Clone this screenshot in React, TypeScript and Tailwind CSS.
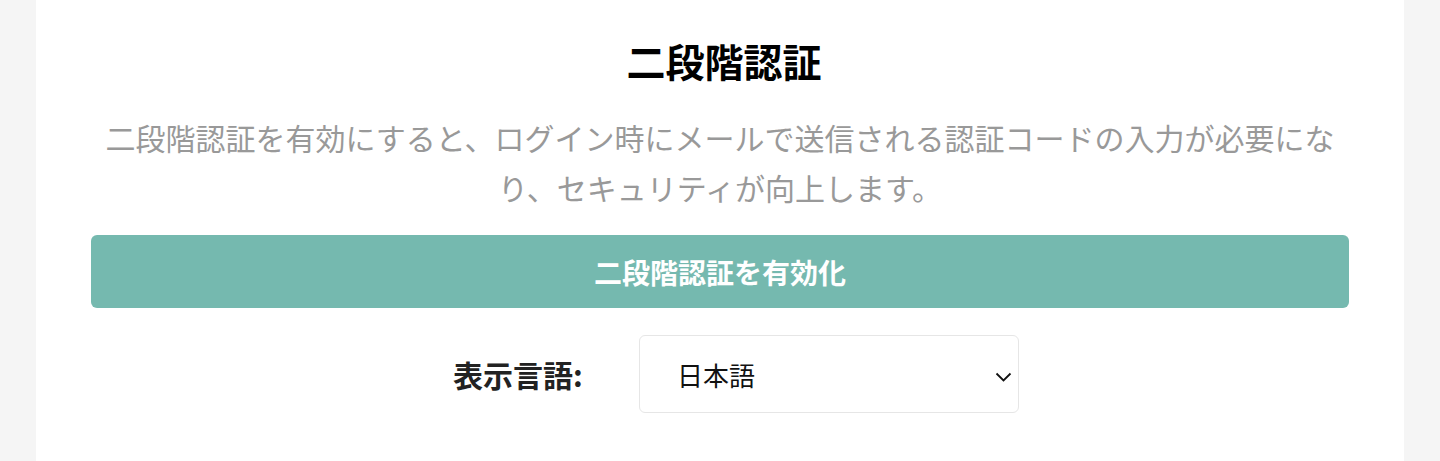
import { useState } from 'react';

const font = '"Noto Sans CJK JP", "Noto Sans", sans-serif';

function LanguageSelect() {
  const [lang, setLang] = useState('ja');

  return (
    <div className="relative w-[380px] h-[78px]">
      <select
        value={lang}
        onChange={(e) => setLang(e.target.value)}
        className="w-full h-full appearance-none rounded-[6px] border border-[#e6e6e6] bg-white pl-[37px] pr-12 text-[26px] text-[#111] outline-none"
        style={{ fontFamily: font }}
      >
        <option value="ja">日本語</option>
        <option value="en">English</option>
      </select>
      <svg
        className="pointer-events-none absolute right-[7px] top-[37px]"
        width="17"
        height="10"
        viewBox="0 0 17 10"
        fill="none"
      >
        <path d="M1.5 1.5 L8.5 8.5 L15.5 1.5" stroke="#111" strokeWidth="1.8" />
      </svg>
    </div>
  );
}

export default function App() {
  return (
    <div
      className="min-h-[461px] bg-[#f5f5f5] px-[36px]"
      style={{ fontFamily: font }}
    >
      <div className="min-h-[461px] bg-white px-[55px] pt-[30px] pb-10">
        <h1 className="pl-[8px] text-center text-[39px] leading-[60px] font-bold text-black">
          二段階認証
        </h1>
        <p className="mt-[22px] text-center text-[30px] leading-[50px] text-[#999]">
          二段階認証を有効にすると、ログイン時にメールで送信される認証コードの入力が必要になり、セキュリティが向上します。
        </p>
        <button className="mt-[23px] flex h-[73px] w-full items-center justify-center rounded-[6px] bg-[#75b9af] text-[28px] font-bold text-white">
          二段階認証を有効化
        </button>
        <div className="mt-[27px] flex items-center justify-center pl-[32px]">
          <label className="w-[186px] text-[30px] font-bold text-[#222]">
            表示言語:
          </label>
          <LanguageSelect />
        </div>
      </div>
    </div>
  );
}
